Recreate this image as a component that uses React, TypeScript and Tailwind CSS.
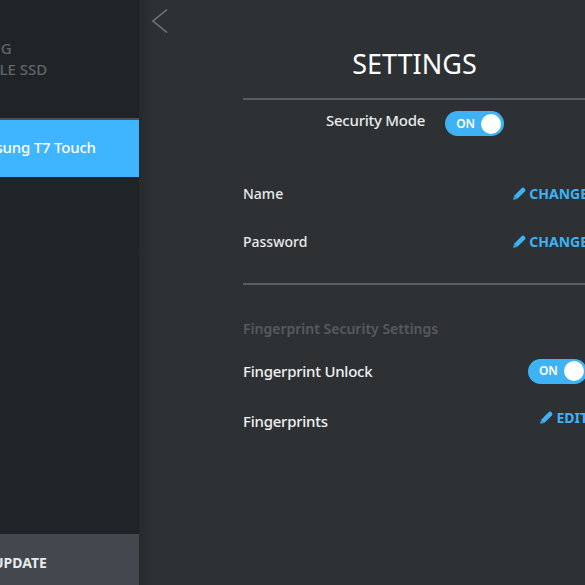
const font = { fontFamily: '"Noto Sans", sans-serif' }

function Pencil() {
    return (
        <svg width="13" height="13" viewBox="0 0 13 13" className="shrink-0">
            <path d="M0.3 12.7 L0.9 8.9 L8.6 1.2 Q9.6 0.2 10.6 0.6 L12.2 2.2 Q13 3.2 11.9 4.4 L4.1 12.1 Z" fill="#3fb2f5" />
            <path d="M0.8 9.2 L3.8 12.2" stroke="#2d3134" strokeWidth="0.5" />
        </svg>
    )
}

function Toggle() {
    return (
        <div className="flex h-[25px] w-[59px] shrink-0 items-center justify-between rounded-full bg-[#3fb2f5] pl-[11px] pr-[3px]">
            <span className="text-[12px] font-semibold text-white">ON</span>
            <span className="h-[20px] w-[20px] rounded-full bg-white" />
        </div>
    )
}

function Action({ label }: { label: string }) {
    return (
        <div className="flex items-center gap-[3px] text-[14px] font-bold text-[#3fb2f5]">
            <Pencil />
            <span>{label}</span>
        </div>
    )
}

export default function App() {
    return (
        <div className="flex h-[585px] w-[585px] overflow-hidden bg-[#2d3134]" style={font}>
            <aside className="flex h-full w-[139px] shrink-0 flex-col justify-between overflow-hidden bg-[#212427]">
                <div>
                    <div className="h-[118px] whitespace-nowrap pt-[38px] text-[15px] font-medium leading-[21px] text-[#63666a]">
                        <div className="-ml-[62px]">SAMSUNG</div>
                        <div className="-ml-[58px]">PORTABLE SSD</div>
                    </div>
                    <div className="flex h-[59px] w-[139px] items-center whitespace-nowrap border-t-2 border-[#4a5257] bg-[#3fb4ff] pb-[3px] text-[15px] font-medium tracking-[-0.2px] text-white">
                        <span className="-ml-[35px]">Samsung T7 Touch</span>
                    </div>
                </div>
                <div className="flex h-[51px] w-[139px] items-center whitespace-nowrap bg-[#42484e] pt-[5px] text-[14px] font-bold text-[#e8eaec]">
                    <span className="-ml-[7px]">UPDATE</span>
                </div>
            </aside>

            <main className="flex h-full flex-1 bg-gradient-to-r from-[#272a2d] to-[#2d3134] to-[12px]">
                <div className="w-[104px] shrink-0 pl-[12px] pt-[8px]">
                    <svg width="18" height="26" viewBox="0 0 18 26">
                        <path d="M16 1.5 L2 13 L16 24.5" fill="none" stroke="#70767b" strokeWidth="1.6" />
                    </svg>
                </div>

                <div className="w-[347px] shrink-0">
                    <h1 className="flex h-[100px] items-start justify-center border-b-2 border-[#565e64] pr-[4px] pt-[44px] text-[27px] font-normal leading-[40px] text-white">
                        SETTINGS
                    </h1>
                    <div className="flex h-[69px] items-start gap-[20px] pl-[83px] pt-[11px] text-[15px] font-medium tracking-[-0.25px] text-[#e8eaec]">
                        <span className="mt-[-2px]">Security Mode</span>
                        <Toggle />
                    </div>

                    <div className="flex h-[48px] items-center justify-between pr-[2px] text-[14px] font-medium text-[#e8eaec]">
                        <span>Name</span>
                        <Action label="CHANGE" />
                    </div>
                    <div className="flex h-[48px] items-center justify-between pr-[2px] text-[14px] font-medium text-[#e8eaec]">
                        <span>Password</span>
                        <Action label="CHANGE" />
                    </div>

                    <div className="mt-[18px] border-t-2 border-[#565e64] pt-[33px] text-[14px] font-semibold text-[#555b60]">
                        Fingerprint Security Settings
                    </div>
                    <div className="mt-[12px] flex h-[40px] items-center justify-between pr-[3px] text-[15px] font-medium tracking-[-0.25px] text-[#f0f1f2]">
                        <span className="mt-[1px]">Fingerprint Unlock</span>
                        <Toggle />
                    </div>
                    <div className="mt-[9px] flex h-[42px] items-center justify-between pr-[2px] text-[15px] font-medium tracking-[-0.25px] text-[#f0f1f2]">
                        <span>Fingerprints</span>
                        <div className="-mt-[8px] tracking-normal">
                            <Action label="EDIT" />
                        </div>
                    </div>
                </div>
            </main>
        </div>
    )
}
